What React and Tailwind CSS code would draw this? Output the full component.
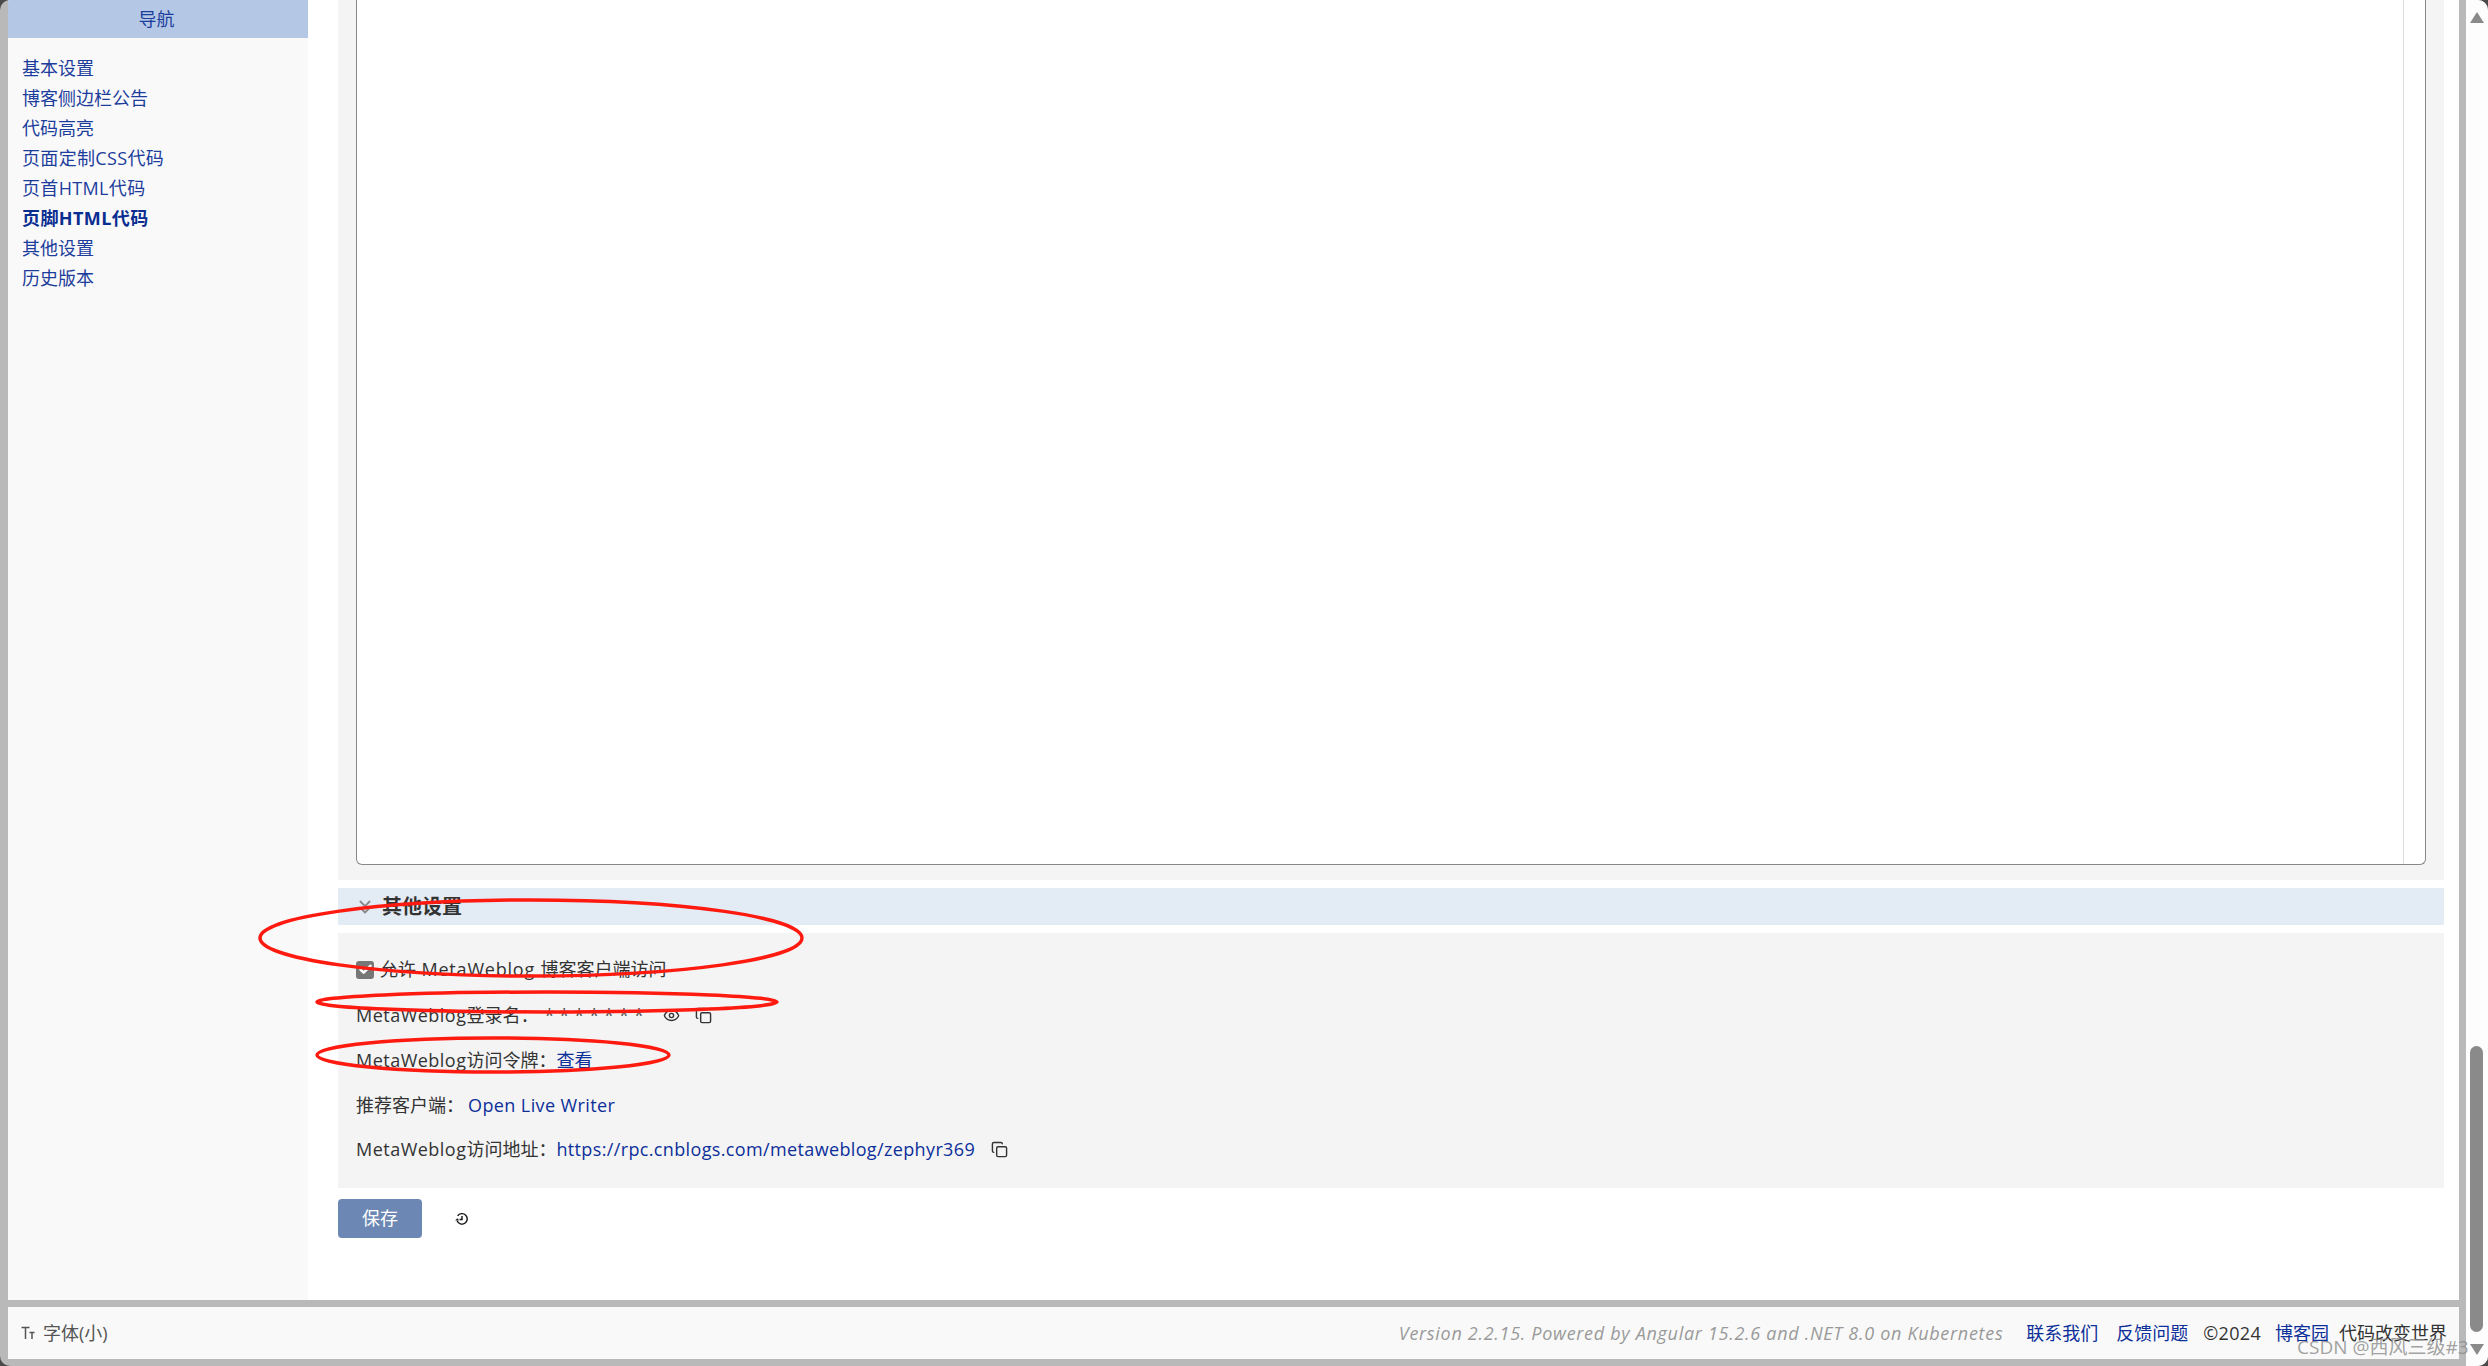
import { Check, Copy, Eye, ChevronsDown } from "lucide-react";

const FONT = "[font-family:'Open_Sans','Noto_Sans_CJK_SC',sans-serif]";

const navItems = [
  { label: "基本设置", className: "text-[#1c3d9c]" },
  { label: "博客侧边栏公告", className: "text-[#1c3d9c]" },
  { label: "代码高亮", className: "text-[#1c3d9c]" },
  { label: "页面定制CSS代码", className: "tracking-[0.33px] text-[#1c3d9c]" },
  { label: "页首HTML代码", className: "tracking-[0.35px] text-[#1c3d9c]" },
  { label: "页脚HTML代码", className: "tracking-[0.4px] font-bold text-[#0a2d91]" },
  { label: "其他设置", className: "text-[#1c3d9c]" },
  { label: "历史版本", className: "text-[#1c3d9c]" },
];

function Sidebar() {
  return (
    <aside className="w-[300px] shrink-0 bg-[#f9f9f9]">
      <div className="h-[38px] bg-[#b4c8e6] flex items-center justify-center text-[#1c3d9c] pr-[3px]">
        导航
      </div>
      <ul className="pt-[15px] pl-[14px]">
        {navItems.map((item) => (
          <li key={item.label} className={`h-[30px] leading-[30px] ${item.className}`}>
            {item.label}
          </li>
        ))}
      </ul>
    </aside>
  );
}

function RestoreIcon() {
  return (
    <svg width="14" height="14" viewBox="0 0 16 16" fill="none" stroke="#111" strokeWidth="1.6">
      <path d="M3 4.5A6 6 0 1 1 2.4 10" />
      <path d="M0.8 9.6 L2.4 7.6 L4.4 9.4" fill="#111" strokeWidth="0.8" />
      <path d="M8 4.5V8.5H5.2" />
    </svg>
  );
}

function FontIcon() {
  return (
    <svg width="14" height="14" viewBox="0 0 14 14" fill="none" stroke="#555" strokeWidth="1.5">
      <path d="M0.5 1.5H8.5M4.5 1.5V13" />
      <path d="M8.5 6.5H13.5M11 6.5V13" />
    </svg>
  );
}

function OtherSettings() {
  return (
    <div className="mt-2 bg-[#f4f4f4] px-[18px] pt-[14px] pb-[16px] text-[#333]">
      <div className="h-[45px] flex items-center">
        <div className="w-[18px] h-[18px] rounded-[3px] bg-[#777] flex items-center justify-center">
          <Check size={15} strokeWidth={4} className="text-white" />
        </div>
        <span className="ml-[6px]">
          允许<span className="tracking-[0.8px]"> MetaWeblog </span>博客客户端访问
        </span>
      </div>
      <div className="h-[46px] flex items-center">
        <span>
          <span className="tracking-[0.48px]">MetaWeblog</span>登录名：
        </span>
        <span className="ml-[6px] tracking-[5px] text-[#555]">*******</span>
        <Eye size={17} className="ml-[14px] text-[#333]" />
        <Copy size={17} className="ml-[15px] text-[#333]" />
      </div>
      <div className="h-[45px] flex items-center">
        <span>
          <span className="tracking-[0.48px]">MetaWeblog</span>访问令牌：
        </span>
        <a className="text-[#0c2f9a]">查看</a>
      </div>
      <div className="h-[44px] flex items-center">
        <span>推荐客户端：</span>
        <a className="ml-[4px] tracking-[0.4px] text-[#0c2f9a]">Open Live Writer</a>
      </div>
      <div className="h-[45px] flex items-center">
        <span>
          <span className="tracking-[0.48px]">MetaWeblog</span>访问地址：
        </span>
        <a className="tracking-[0.36px] text-[#0c2f9a]">https://rpc.cnblogs.com/metaweblog/zephyr369</a>
        <Copy size={17} className="ml-[16px] text-[#333]" />
      </div>
    </div>
  );
}

function Content() {
  return (
    <main className="flex-1 bg-white pl-[30px] pr-[15px]">
      {/* Editor panel */}
      <div className="h-[880px] bg-[#f4f4f4] px-[18px] pb-[15px] flex">
        <div className="flex-1 bg-white border-x border-b border-[#888] rounded-b-[6px] flex justify-end">
          <div className="w-[22px] border-l border-[#ddd]" />
        </div>
      </div>

      <div className="mt-2 h-[37px] bg-[#e3ebf5] flex items-center pl-[16px]">
        <ChevronsDown size={22} className="text-[#888]" />
        <span className="ml-[6px] text-[20px] font-bold text-[#333]">其他设置</span>
      </div>

      <OtherSettings />

      <div className="mt-[11px] flex items-center">
        <button className="w-[84px] h-[39px] rounded bg-[#6c87b3] text-white">保存</button>
        <span className="ml-[33px]">
          <RestoreIcon />
        </span>
      </div>
    </main>
  );
}

function Footer() {
  return (
    <footer className="h-[52px] bg-[#f9f9f9] flex items-center pl-[13px] pr-[12px] text-[#555]">
      <FontIcon />
      <span className="ml-[8px]">字体(小)</span>
      <div className="ml-auto flex items-center">
        <span className="italic tracking-[0.7px] text-[#999]">Version 2.2.15. Powered by Angular 15.2.6 and .NET 8.0 on Kubernetes</span>
        <a className="ml-[23px] text-[#0c2f9a]">联系我们</a>
        <a className="ml-[18px] text-[#0c2f9a]">反馈问题</a>
        <span className="ml-[15px] tracking-[0.3px] text-[#333]">©2024</span>
        <a className="ml-[14px] text-[#0c2f9a]">博客园</a>
        <span className="ml-[10px] text-[#333]">代码改变世界</span>
      </div>
    </footer>
  );
}

function Scrollbar() {
  return (
    <div className="w-[22px] shrink-0 bg-[#fdfdfd] flex flex-col items-center pr-[1px] pt-[12px] pb-[11px]">
      <div className="w-0 h-0 border-x-[7px] border-x-transparent border-b-[11px] border-b-[#8a8a8a]" />
      <div className="mt-auto w-[13px] h-[286px] rounded-full bg-[#8a8a8a]" />
      <div className="mt-[12px] w-0 h-0 border-x-[7px] border-x-transparent border-t-[11px] border-t-[#8a8a8a]" />
    </div>
  );
}

export default function App() {
  return (
    <div className={`relative w-[2488px] h-[1366px] bg-[#4a4a4a] overflow-hidden text-[18px] ${FONT}`}>
      <div className="w-full h-full rounded-[10px] overflow-hidden bg-[#b9b9b9] flex">
        <div className="flex-1 pl-2 pr-[7px] flex flex-col">
          <div className="h-[1300px] flex">
            <Sidebar />
            <Content />
          </div>
          <div className="mt-[7px]">
            <Footer />
          </div>
        </div>
        <Scrollbar />
      </div>

      {/* Hand-drawn red annotations */}
      <svg className="absolute inset-0 pointer-events-none" width="2488" height="1366" fill="none" stroke="#ff1a10" strokeWidth="3.5">
        <ellipse cx="531" cy="938" rx="271" ry="38" />
        <ellipse cx="547" cy="1002" rx="230" ry="10" />
        <ellipse cx="493" cy="1055" rx="176" ry="17" />
      </svg>

      <span className="absolute left-[2297px] top-[1335px] text-[19px] leading-[24px] text-[#8a8a8a]/80 whitespace-nowrap">
        CSDN @西风三级#3
      </span>
    </div>
  );
}
